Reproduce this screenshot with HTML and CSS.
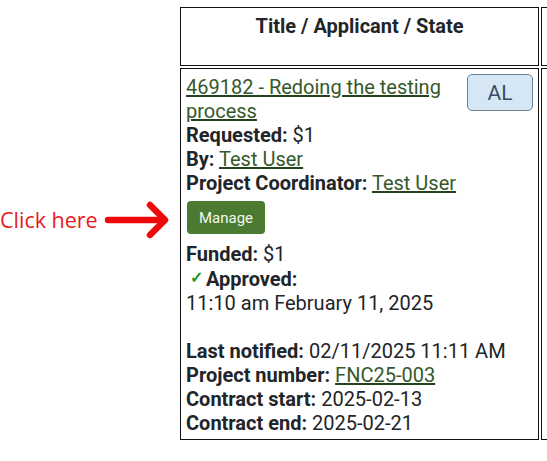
FILE: index.html
```html
<!DOCTYPE html>
<html>
<head>
<meta charset="utf-8">
<link rel="stylesheet" href="styles.css">
</head>
<body>
<div class="page">
  <div class="note">
    <div class="note-row">
      <span class="note-text">Click here</span>
      <svg class="arrow" width="66" height="40" viewBox="0 0 66 40">
        <path d="M4 20 H60 M46 5 L61 20 L46 35" fill="none" stroke="#ee0a0a" stroke-width="6.5" stroke-linecap="round" stroke-linejoin="round"/>
      </svg>
    </div>
  </div>
  <table class="grid">
    <thead>
      <tr>
        <th class="head">Title / Applicant / State</th>
        <th class="head other"></th>
      </tr>
    </thead>
    <tbody>
      <tr>
        <td class="cell">
          <div class="title-row">
            <a class="link title" href="#">469182 - Redoing the testing process</a>
            <span class="badge">AL</span>
          </div>
          <div><b>Requested:</b> $1</div>
          <div><b>By:</b> <a class="link" href="#">Test User</a></div>
          <div><b>Project Coordinator:</b> <a class="link" href="#">Test User</a></div>
          <button class="manage">Manage</button>
          <div><b>Funded:</b> $1</div>
          <div class="approved"><span class="check">✓</span><b>Approved:</b></div>
          <div>11:10 am February 11, 2025</div>
          <div class="blank"></div>
          <div><b>Last notified:</b> 02/11/2025 11:11 AM</div>
          <div><b>Project number:</b> <a class="link" href="#">FNC25-003</a></div>
          <div><b>Contract start:</b> 2025-02-13</div>
          <div><b>Contract end:</b> 2025-02-21</div>
        </td>
        <td class="cell other"></td>
      </tr>
    </tbody>
  </table>
</div>
</body>
</html>
```

FILE: styles.css
```css
html, body {
  margin: 0;
  padding: 0;
  background: #ffffff;
  overflow: hidden;
}
body {
  font-family: Roboto, "Liberation Sans", sans-serif;
  color: #212529;
  font-size: 20px;
  line-height: 24px;
}
.page {
  display: flex;
  align-items: flex-start;
  padding-top: 5px;
  width: 900px;
}
.note {
  width: 178px;
  flex: none;
  padding-top: 195px;
}
.note-row {
  display: flex;
  align-items: center;
  gap: 8px;
}
.note-text {
  font-family: "Open Sans", "Noto Sans", sans-serif;
  font-size: 21.5px;
  color: #e8191c;
  line-height: 28px;
}
.arrow {
  display: block;
  margin-left: -2px;
}
.grid {
  border-collapse: separate;
  border-spacing: 2px;
  flex: none;
}
.head {
  border: 1px solid #111;
  width: 347px;
  height: 47px;
  padding: 5px;
  vertical-align: top;
  text-align: center;
  font-weight: 700;
  font-size: 20px;
  line-height: 26px;
}
.cell {
  border: 1px solid #111;
  padding: 6px 5px 4px 5px;
  vertical-align: top;
  text-align: left;
}
.other {
  width: 300px;
}
.title-row {
  display: flex;
  justify-content: space-between;
  align-items: flex-start;
}
.title {
  width: 272px;
}
.link {
  color: #35592a;
  text-decoration: underline;
  text-decoration-color: #24421b;
}
.badge {
  margin-top: -1px;
  width: 66px;
  height: 37px;
  box-sizing: border-box;
  border: 1px solid #6b8296;
  border-radius: 5px;
  background: #d5e7f5;
  color: #3a4d65;
  font-size: 21px;
  display: flex;
  align-items: center;
  justify-content: center;
}
.manage {
  display: block;
  margin: 6px 0 8px 1px;
  width: 78px;
  height: 33px;
  border: none;
  border-radius: 4px;
  background: #4a7b30;
  color: #f2f7ee;
  font-family: Roboto, "Liberation Sans", sans-serif;
  font-size: 15px;
  padding: 0;
}
.approved {
  padding-left: 4px;
}
.check {
  color: #1e9a2b;
  font-size: 16px;
  font-weight: 700;
  display: inline-block;
  width: 16px;
  vertical-align: 3px;
}
.blank {
  height: 24px;
}
```
